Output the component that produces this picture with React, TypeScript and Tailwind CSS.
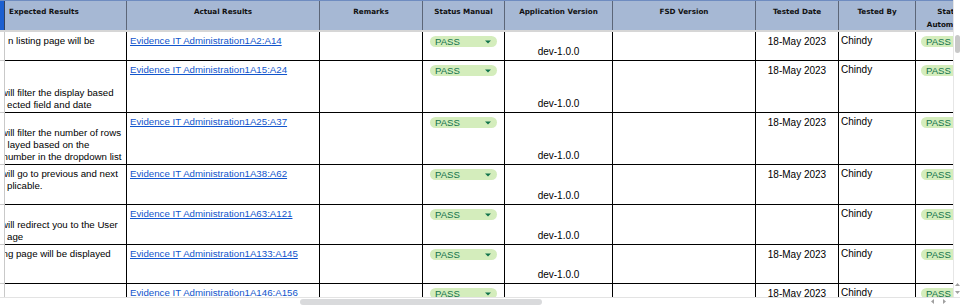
import React from "react";

type Line = { t: string; ml?: string };

interface Row {
  h: string;
  exp: Line[];
  expBottom?: boolean;
  link: string;
  dev?: boolean;
  date?: string;
  by?: string;
}

const COLS =
  "grid grid-cols-[5px_122px_193px_103px_82px_108px_143px_83px_77px_70px]";

const rows: Row[] = [
  {
    h: "h-[29px]",
    exp: [{ t: "n listing page will be", ml: "ml-[1px]" }],
    link: "Evidence IT Administration1A2:A14",
    dev: true,
    date: "18-May 2023",
    by: "Chindy",
  },
  {
    h: "h-[52px]",
    exp: [
      { t: "will filter the display based", ml: "-ml-[6px]" },
      { t: "ected field and date" },
    ],
    expBottom: true,
    link: "Evidence IT Administration1A15:A24",
    dev: true,
    date: "18-May 2023",
    by: "Chindy",
  },
  {
    h: "h-[52px]",
    exp: [
      { t: "will filter the number of rows", ml: "-ml-[6px]" },
      { t: "layed based on the", ml: "ml-[0.5px]" },
      { t: "number in the dropdown list", ml: "-ml-[4.5px]" },
    ],
    expBottom: true,
    link: "Evidence IT Administration1A25:A37",
    dev: true,
    date: "18-May 2023",
    by: "Chindy",
  },
  {
    h: "h-[40px]",
    exp: [
      { t: "will go to previous and next", ml: "-ml-[6px]" },
      { t: "plicable." },
    ],
    link: "Evidence IT Administration1A38:A62",
    dev: true,
    date: "18-May 2023",
    by: "Chindy",
  },
  {
    h: "h-[40px]",
    exp: [
      { t: "will redirect you to the User", ml: "-ml-[6px]" },
      { t: "age" },
    ],
    expBottom: true,
    link: "Evidence IT Administration1A63:A121",
    dev: true,
    by: "Chindy",
  },
  {
    h: "h-[39px]",
    exp: [{ t: "ng page will be displayed", ml: "-ml-[4.5px]" }],
    link: "Evidence IT Administration1A133:A145",
    dev: true,
    date: "18-May 2023",
    by: "Chindy",
  },
  {
    h: "h-[40px]",
    exp: [],
    link: "Evidence IT Administration1A146:A156",
    date: "18-May 2023",
    by: "Chindy",
  },
];

function Chip() {
  return (
    <div className="flex h-[11px] w-[67px] items-center justify-between rounded-full bg-[#d4edbc] pl-[5px] pr-[6px] text-[9.6px] leading-none text-[#11734b]">
      <span>PASS</span>
      <svg width="6" height="4" viewBox="0 0 6 4">
        <path d="M0 0.5h6L3 3.5z" fill="#11734b" />
      </svg>
    </div>
  );
}

function Header() {
  const cell =
    "border-r border-[#5c6678] bg-[#a6b8d4] pt-[4px] text-[7.2px] font-bold leading-[13px] text-[#111]";
  return (
    <div
      className={`${COLS} h-[30px] border-t border-[#6f8cc0] font-['DejaVu_Sans',Verdana,sans-serif]`}
    >
      <div className="border-r border-[#33415c] bg-[#1c5fd0]" />
      <div className={`${cell} pl-[4px]`}>Expected Results</div>
      <div className={`${cell} text-center`}>Actual Results</div>
      <div className={`${cell} text-center`}>Remarks</div>
      <div className={`${cell} text-center`}>Status Manual</div>
      <div className={`${cell} text-center`}>Application Version</div>
      <div className={`${cell} text-center`}>FSD Version</div>
      <div className={`${cell} text-center`}>Tested Date</div>
      <div className={`${cell} text-center`}>Tested By</div>
      <div className={`${cell} whitespace-nowrap text-center`}>
        Status
        <br />
        Automation
      </div>
    </div>
  );
}

function DataRow({ row }: { row: Row }) {
  const cell = "border-r border-b border-black overflow-hidden";
  return (
    <div className={`${COLS} ${row.h} shrink-0`}>
      <div className="border-r border-b border-[#c9c9c9] bg-white" />
      <div
        className={`${cell} flex flex-col whitespace-nowrap pl-[2px] text-[9.7px] leading-[12px] text-black ${
          row.expBottom ? "justify-end pb-[1px]" : "justify-start pt-[3px]"
        }`}
      >
        {row.exp.map((l, i) => (
          <div key={i} className={l.ml ?? ""}>
            {l.t}
          </div>
        ))}
      </div>
      <div className={`${cell} pl-[3px] pt-[3px] text-[9.7px] leading-[12px]`}>
        <a href="#" className="whitespace-nowrap text-[#1155cc] underline">
          {row.link}
        </a>
      </div>
      <div className={cell} />
      <div className={`${cell} pl-[7px] pt-[4px]`}>
        <Chip />
      </div>
      <div
        className={`${cell} flex items-end justify-center pb-[2px] text-[10px] leading-[12px] text-black`}
      >
        {row.dev ? "dev-1.0.0" : ""}
      </div>
      <div className={cell} />
      <div
        className={`${cell} pt-[4px] text-center text-[10px] leading-[12px] text-black`}
      >
        {row.date ?? ""}
      </div>
      <div className={`${cell} pl-[2px] pt-[3px] text-[10px] leading-[12px] text-black`}>
        {row.by ?? ""}
      </div>
      <div className={`${cell} pl-[5px] pt-[4px]`}>
        <Chip />
      </div>
    </div>
  );
}

export default function App() {
  return (
    <div className="flex h-[305px] w-[960px] flex-col overflow-hidden bg-white font-['Liberation_Sans',Arial,sans-serif]">
      <div className="flex h-[297px] shrink-0">
        <div className="flex w-[953px] flex-col overflow-hidden">
          <Header />
          <div className="h-[2px] shrink-0 bg-[#d6d6d6]" />
          {rows.map((r, i) => (
            <DataRow key={i} row={r} />
          ))}
        </div>
        {/* vertical scrollbar */}
        <div className="flex w-[7px] flex-col border-l border-[#e6e6e6] bg-white">
          <div className="mt-[35px] ml-[1px] h-[18px] w-[5px] rounded-full bg-[#c8c8c8]" />
          <div className="mt-auto mb-[3px] flex flex-col items-center gap-[5px]">
            <svg width="5" height="3" viewBox="0 0 5 3">
              <path d="M2.5 0L5 3H0z" fill="#a0a0a0" />
            </svg>
            <svg width="5" height="3" viewBox="0 0 5 3">
              <path d="M0 0h5L2.5 3z" fill="#a0a0a0" />
            </svg>
          </div>
        </div>
      </div>
      {/* horizontal scrollbar */}
      <div className="flex h-[8px] items-center border-t border-[#e3e3e3] bg-white">
        <div className="ml-[300px] h-[6px] w-[242px] self-end rounded-full bg-[#d9dadc]" />
        <div className="ml-auto mr-[14px] flex items-center gap-[9px]">
          <svg width="3" height="5" viewBox="0 0 3 5">
            <path d="M3 0v5L0 2.5z" fill="#a0a0a0" />
          </svg>
          <svg width="3" height="5" viewBox="0 0 3 5">
            <path d="M0 0v5l3-2.5z" fill="#a0a0a0" />
          </svg>
        </div>
      </div>
    </div>
  );
}
